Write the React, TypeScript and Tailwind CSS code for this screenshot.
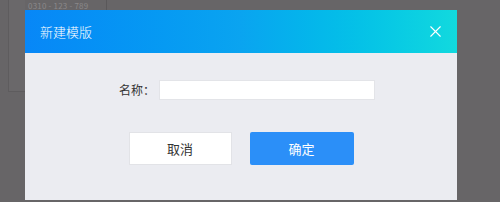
import { X } from 'lucide-react';

const font = { fontFamily: '"Noto Sans CJK SC", "Noto Sans", sans-serif' };

export default function App() {
  return (
    <div className="relative w-[500px] h-[202px] overflow-hidden bg-[#676567]" style={font}>
      {/* page behind the overlay */}
      <div className="flex items-start">
        <div className="w-[17px] h-[92px] ml-[8px] border-l border-b border-[#5e5c5e] bg-[#6a686a]" />
        <div className="ml-[3px] pt-[1px] text-[8px] leading-[10px] text-[#8a888a] tracking-wide">0310 - 123 - 789</div>
        <div className="ml-[18px] w-px h-[10px] bg-[#5a585a]" />
      </div>

      {/* dialog */}
      <div className="absolute left-[25px] top-[10px] w-[432px] h-[190px] flex flex-col bg-[#ebecf1]">
        <div className="h-[43px] flex items-center justify-between pl-[15px] pr-[12px] bg-gradient-to-r from-[#0887f7] via-[#0aa4f0] to-[#12d9de]">
          <span className="text-[13px] font-light text-white">新建模版</span>
          <X className="w-[19px] h-[19px] text-white" strokeWidth={1.4} />
        </div>

        <div className="flex items-center justify-center mt-[27px] pl-[12px]">
          <span className="text-[12px] text-[#333]">名称：</span>
          <input
            type="text"
            className="ml-[4px] w-[216px] h-[20px] bg-white border border-[#e3e4e8] outline-none"
          />
        </div>

        <div className="flex justify-center gap-[18px] mt-[32px]">
          <button
            type="button"
            className="w-[103px] h-[33px] bg-white border border-[#e2e3e7] text-[13px] text-[#333]"
          >
            取消
          </button>
          <button
            type="button"
            className="w-[104px] h-[33px] rounded-[2px] bg-[#2b8ff8] text-[13px] text-white"
          >
            确定
          </button>
        </div>
      </div>
    </div>
  );
}
